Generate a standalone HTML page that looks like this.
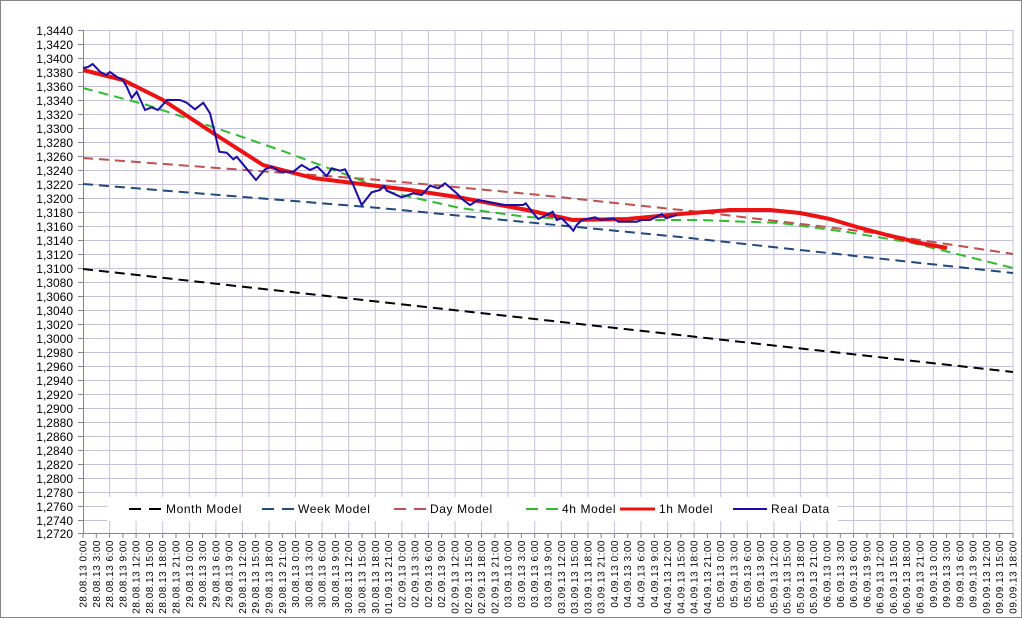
<!DOCTYPE html>
<html><head><meta charset="utf-8"><style>
html,body{margin:0;padding:0;background:#fff}
svg{display:block}
text{font-family:"Liberation Sans","DejaVu Sans",sans-serif;fill:#000}
</style></head><body>
<svg width="1022" height="619" xmlns="http://www.w3.org/2000/svg">
<rect x="0.5" y="0.5" width="1021" height="617" fill="#fff" stroke="#868686"/>
<g id="grid" stroke="#c6c0da" stroke-width="1">
<path d="M83 30.5H1013M83 44.5H1013M83 58.5H1013M83 72.5H1013M83 86.5H1013M83 100.5H1013M83 114.5H1013M83 128.5H1013M83 142.5H1013M83 156.5H1013M83 170.5H1013M83 184.5H1013M83 198.5H1013M83 212.5H1013M83 226.5H1013M83 240.5H1013M83 254.5H1013M83 268.5H1013M83 282.5H1013M83 296.5H1013M83 310.5H1013M83 324.5H1013M83 338.5H1013M83 352.5H1013M83 366.5H1013M83 380.5H1013M83 394.5H1013M83 408.5H1013M83 422.5H1013M83 436.5H1013M83 450.5H1013M83 464.5H1013M83 478.5H1013M83 492.5H1013M83 506.5H1013M83 520.5H1013"/>
<path d="M109.6 30V533M136.1 30V533M162.7 30V533M189.3 30V533M215.9 30V533M242.4 30V533M269 30V533M295.6 30V533M322.1 30V533M348.7 30V533M375.3 30V533M401.9 30V533M428.4 30V533M455 30V533M481.6 30V533M508.1 30V533M534.7 30V533M561.3 30V533M587.9 30V533M614.4 30V533M641 30V533M667.6 30V533M694.1 30V533M720.7 30V533M747.3 30V533M773.9 30V533M800.4 30V533M827 30V533M853.6 30V533M880.1 30V533M906.7 30V533M933.3 30V533M959.9 30V533M986.4 30V533M1013 30V533"/>
</g>
<path d="M83.5 30V534M78 30.5H83M78 44.5H83M78 58.5H83M78 72.5H83M78 86.5H83M78 100.5H83M78 114.5H83M78 128.5H83M78 142.5H83M78 156.5H83M78 170.5H83M78 184.5H83M78 198.5H83M78 212.5H83M78 226.5H83M78 240.5H83M78 254.5H83M78 268.5H83M78 282.5H83M78 296.5H83M78 310.5H83M78 324.5H83M78 338.5H83M78 352.5H83M78 366.5H83M78 380.5H83M78 394.5H83M78 408.5H83M78 422.5H83M78 436.5H83M78 450.5H83M78 464.5H83M78 478.5H83M78 492.5H83M78 506.5H83M78 520.5H83M78 533.5H83M83 533.5H1013" stroke="#868686" fill="none"/>
<g id="xt" stroke="#868686"></g>
<g font-size="12" text-anchor="end">
<text x="73" y="35">1,3440</text><text x="73" y="49">1,3420</text><text x="73" y="63">1,3400</text><text x="73" y="77">1,3380</text><text x="73" y="91">1,3360</text><text x="73" y="105">1,3340</text><text x="73" y="119">1,3320</text><text x="73" y="133">1,3300</text><text x="73" y="147">1,3280</text><text x="73" y="161">1,3260</text><text x="73" y="175">1,3240</text><text x="73" y="189">1,3220</text><text x="73" y="203">1,3200</text><text x="73" y="217">1,3180</text><text x="73" y="231">1,3160</text><text x="73" y="245">1,3140</text><text x="73" y="259">1,3120</text><text x="73" y="273">1,3100</text><text x="73" y="287">1,3080</text><text x="73" y="301">1,3060</text><text x="73" y="315">1,3040</text><text x="73" y="329">1,3020</text><text x="73" y="343">1,3000</text><text x="73" y="357">1,2980</text><text x="73" y="371">1,2960</text><text x="73" y="385">1,2940</text><text x="73" y="399">1,2920</text><text x="73" y="413">1,2900</text><text x="73" y="427">1,2880</text><text x="73" y="441">1,2860</text><text x="73" y="455">1,2840</text><text x="73" y="469">1,2820</text><text x="73" y="483">1,2800</text><text x="73" y="497">1,2780</text><text x="73" y="511">1,2760</text><text x="73" y="525">1,2740</text><text x="73" y="538">1,2720</text>
</g>
<g id="xl" font-size="10" letter-spacing="0.5" text-anchor="end"></g>
<g fill="none">
<polyline points="83,269 1013,372" stroke="#000" stroke-width="2" stroke-dasharray="10,6"/>
<polyline points="83,184 380,208 680,237 1013,273" stroke="#1f4a7c" stroke-width="2" stroke-dasharray="10,6"/>
<polyline points="83,158 380,180 540,195 700,212 860,231 1013,254" stroke="#c0504d" stroke-width="2" stroke-dasharray="10,6"/>
<polyline points="83,88 147,105 213,127 280,150 347,175 393,193 460,208 527,217 593,220 700,220 780,223 847,232 913,243 1013,268" stroke="#2dbd2d" stroke-width="2" stroke-dasharray="10,6"/>
<polyline points="83,70 123,80 163,100 213,133 263,165 313,178 353,183 410,190 457,197 527,210 573,220 627,219 680,214 730,210 770,210 800,213 830,219 857,227 887,235 920,243 947,248" stroke="#ee1111" stroke-width="4" stroke-linejoin="round"/>
<polyline points="83,68 88,67 92.7,64 100,71.7 106,75 110,72 117,77 122.7,80 126.7,86.7 131.7,98 136.7,91.7 145,110 151.7,107.3 158,110 167,100 180,100 186.7,102.7 195,109.3 203.3,102.7 210,113.3 213.3,126.7 219.3,151.7 226.7,152.7 233.3,159.3 236.7,156.7 245,166.7 256,180 265,169.3 271.7,166.7 280,171.7 293.3,171.7 301.7,165 310,170 317.3,166.7 326.7,176 331.7,168.3 340,170.7 345,169.3 353.3,185 361.7,205 371.7,192.3 380,190 384,186 386.7,190.7 401.7,197.3 413.3,193.3 421.7,195 430,185.7 438.3,188.3 445,183.3 456.7,193.3 463.3,200 470,205 478.3,200 486.7,201.7 503.3,205 523.3,205 525.7,203.3 533.3,213.3 538.3,219 546.7,215 552.7,211.7 556.7,220 561.7,218.3 568.3,225 573.3,230.7 576.7,225 581.7,220 595,217.3 601.7,220 613.3,218.3 618.3,221.7 636.7,221.7 641.7,220 650,220 661.7,214 666,218.3 676.7,215" stroke="#1a0dab" stroke-width="2"/>
</g>
<rect x="107" y="497" width="731" height="24" fill="#fff"/>
<g stroke-width="2" fill="none">
<path d="M129 509H161" stroke="#000" stroke-dasharray="12,8"/>
<path d="M262 509H294" stroke="#1f4a7c" stroke-dasharray="12,8"/>
<path d="M394 509H426" stroke="#c0504d" stroke-dasharray="12,8"/>
<path d="M526 509H558" stroke="#2dbd2d" stroke-dasharray="12,8"/>
<path d="M620 509H655" stroke="#ee1111" stroke-width="3"/>
<path d="M733 509H767" stroke="#1a0dab"/>
</g>
<g font-size="12" letter-spacing="0.6">
<text x="166" y="513">Month Model</text><text x="298" y="513">Week Model</text><text x="430" y="513">Day Model</text><text x="562" y="513">4h Model</text><text x="659" y="513">1h Model</text><text x="771" y="513">Real Data</text>
</g>
</svg>
<script>
(function(){
var L=[];
function day(d,hs){hs.forEach(function(h){L.push(d+".13 "+h+":00");});}
var all=[0,3,6,9,12,15,18,21];
day("28.08",all);day("29.08",all);day("30.08",[0,3,6,9,12,15,18]);day("01.09",[21]);
day("02.09",all);day("03.09",all);day("04.09",all);day("05.09",all);day("06.09",all);day("09.09",[0,3,6,9,12,15,18]);
var ns="http://www.w3.org/2000/svg",g=document.getElementById("xl"),t=document.getElementById("xt"),d="";
for(var i=0;i<L.length;i++){var x=83+i*(930/70);
 d+="M"+x.toFixed(1)+" 533V538";
 var e=document.createElementNS(ns,"text");
 e.setAttribute("transform","translate("+(x+3.5).toFixed(1)+",540) rotate(-90)");
 e.setAttribute("x","0");e.setAttribute("y","0");e.textContent=L[i];g.appendChild(e);}
var p=document.createElementNS(ns,"path");p.setAttribute("d",d);t.appendChild(p);
})();
</script>
</body></html>
